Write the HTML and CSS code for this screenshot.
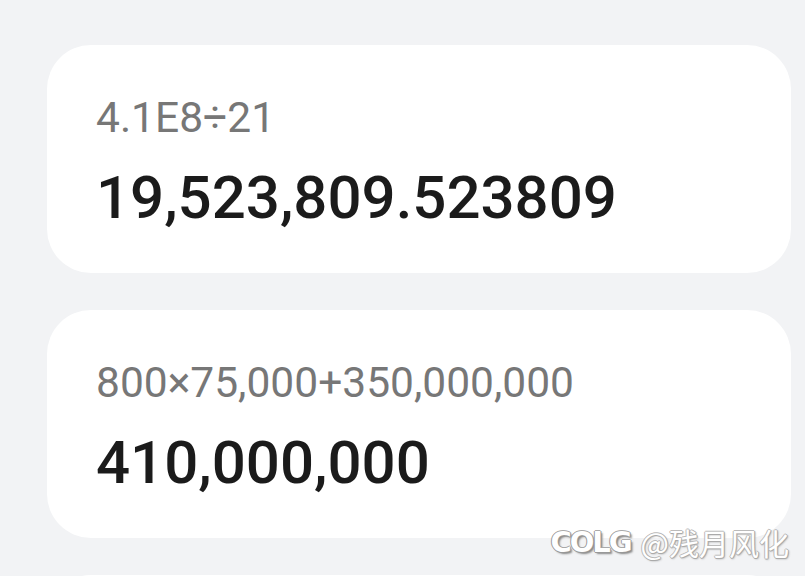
FILE: index.html
```html
<!DOCTYPE html>
<html lang="zh-CN">
<head>
    <meta charset="UTF-8">
    <title>计算历史</title>
    <link rel="stylesheet" href="styles.css">
</head>
<body>
    <div class="history">
        <div class="record">
            <div class="expr">4.1E8÷21</div>
            <div class="result">19,523,809.523809</div>
        </div>
        <div class="record">
            <div class="expr">800×75,000+350,000,000</div>
            <div class="result">410,000,000</div>
        </div>
        <div class="record"></div>
    </div>
    <div class="watermark"><span class="wm-logo">COLG</span><span class="wm-name">@残月风化</span></div>
</body>
</html>
```

FILE: styles.css
```css
*{
    margin: 0;
    padding: 0;
    box-sizing: border-box;
}
html, body{
    height: 100%;
    overflow: hidden;
}
body{
    background-color: #f2f3f5;
    font-family: Roboto, "Noto Sans", sans-serif;
    position: relative;
}
.history{
    display: flex;
    flex-direction: column;
    gap: 37px;
    height: 100vh;
    overflow: hidden;
    padding: 45px 14px 0 47px;
}
.record{
    background-color: #fff;
    border-radius: 44px;
    height: 228px;
    padding: 48px 49px 0;
    display: flex;
    flex-direction: column;
    flex-shrink: 0;
}
.expr{
    font-size: 42.5px;
    line-height: 50px;
    color: #777;
}
.result{
    font-size: 60px;
    line-height: 72px;
    font-weight: 500;
    color: #1b1b1b;
    margin-top: 19px;
}
.watermark{
    position: absolute;
    right: 16px;
    top: 520px;
    display: flex;
    align-items: center;
    gap: 10px;
    color: #fff;
}
.wm-logo{
    font-family: "DejaVu Sans", sans-serif;
    font-weight: bold;
    font-size: 29px;
    letter-spacing: -2px;
    text-shadow: 1px 0 0 #999, -1px 0 0 #999, 0 1px 0 #999, 0 -1px 0 #aaa, 2px 2px 2px #888;
}
.wm-name{
    font-family: "Noto Sans CJK SC", sans-serif;
    font-size: 30px;
    text-shadow: 1px 0 0 #aaa, -1px 0 0 #bbb, 0 1px 0 #aaa, 0 -1px 0 #bbb, 1px 1px 2px #999;
}
```
